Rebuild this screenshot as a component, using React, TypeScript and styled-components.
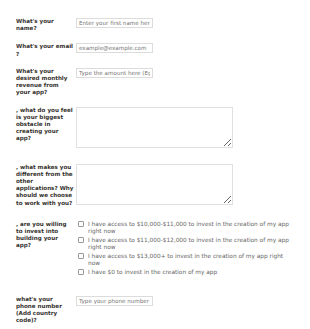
import React from 'react'
import styled, { createGlobalStyle } from 'styled-components'

const GlobalStyle = createGlobalStyle`
  html, body {
    margin: 0;
    padding: 0;
    background: #fff;
  }
  body {
    font-family: "DejaVu Sans", Verdana, sans-serif;
  }
`

interface IRow {
  gap: number
}

const options = [
  'I have access to $10,000-$11,000 to invest in the creation of my app right now',
  'I have access to $11,000-$12,000 to invest in the creation of my app right now',
  'I have access to $13,000+ to invest in the creation of my app right now',
  'I have $0 to invest in the creation of my app',
]

const App: React.FC = () => {
  return (
    <>
      <GlobalStyle />
      <Page>
        <Row gap={11}>
          <Label>What's your name?</Label>
          <TextInput placeholder="Enter your first name here" />
        </Row>
        <Row gap={10}>
          <Label>What's your email ?</Label>
          <TextInput placeholder="example@example.com" />
        </Row>
        <Row gap={10}>
          <Label>What's your desired monthly revenue from your app?</Label>
          <TextInput placeholder="Type the amount here (Eg. $10,000)" />
        </Row>
        <Row gap={16}>
          <Label>, what do you feel is your biggest obstacle in creating your app?</Label>
          <TextArea />
        </Row>
        <Row gap={14}>
          <Label>
            , what makes you different from the other applications? Why should we choose to work
            with you?
          </Label>
          <TextArea />
        </Row>
        <Row gap={20}>
          <Label>, are you willing to invest into building your app?</Label>
          <OptionList>
            {options.map((text) => (
              <Option key={text}>
                <Check type="checkbox" />
                <OptionText>{text}</OptionText>
              </Option>
            ))}
          </OptionList>
        </Row>
        <Row gap={0}>
          <Label>what's your phone number (Add country code)?</Label>
          <TextInput placeholder="Type your phone number" />
        </Row>
      </Page>
    </>
  )
}

export default App

const Page = styled.form`
  padding: 18px 16px 0;
  width: 310px;
  height: 329px;
  box-sizing: border-box;
  overflow: hidden;
`

const Row = styled.div<IRow>`
  display: flex;
  align-items: flex-start;
  margin-bottom: ${(p) => p.gap}px;
`

const Label = styled.label`
  width: 58px;
  flex-shrink: 0;
  margin-right: 2px;
  font-size: 5.6px;
  line-height: 7.2px;
  font-weight: bold;
  color: #36322e;
`

const TextInput = styled.input`
  width: 77px;
  height: 10px;
  box-sizing: border-box;
  padding: 0 2px;
  border: 1px solid #dcdcdc;
  font-family: "DejaVu Sans", Verdana, sans-serif;
  font-size: 5.6px;
  color: #555;
  outline: none;

  ::placeholder {
    color: #8a8a8a;
  }
`

const TextArea = styled.textarea`
  width: 157px;
  height: 41px;
  box-sizing: border-box;
  border: 1px solid #e0e0e0;
  padding: 2px;
  font-family: "DejaVu Sans", Verdana, sans-serif;
  font-size: 5.6px;
  outline: none;
  margin: 0;
  resize: vertical;
`

const OptionList = styled.div`
  display: flex;
  flex-direction: column;
  gap: 2px;
  width: 218px;
  padding-left: 2px;
`

const Option = styled.label`
  display: flex;
  align-items: flex-start;
  gap: 4px;
`

const Check = styled.input`
  appearance: none;
  width: 6px;
  height: 6px;
  margin: 0;
  margin-top: 0.5px;
  border: 0.8px solid #9a9a9a;
  border-radius: 1px;
  background: #fff;
  flex-shrink: 0;
`

const OptionText = styled.span`
  font-size: 5.8px;
  line-height: 7px;
  color: #666;
`
